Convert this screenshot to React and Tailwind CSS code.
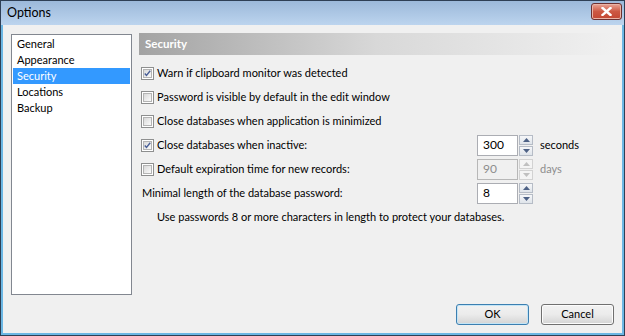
import { useState } from 'react';

const font = { fontFamily: 'Lato, "Liberation Sans", Arial, sans-serif' };

const Checkbox = ({ checked }) => (
  <div className="w-[13px] h-[13px] shrink-0 border border-[#8e8f8f] bg-white p-px">
    <div className="w-full h-full border border-[#b4b4b4] bg-gradient-to-br from-[#d9d9d9] to-[#fbfbfb] flex items-center justify-center">
      {checked && (
        <svg width="9" height="9" viewBox="0 0 9 9">
          <path d="M1 4.5 L3.2 7 L8 1" fill="none" stroke="#4a5f97" strokeWidth="1.8" />
        </svg>
      )}
    </div>
  </div>
);

const Spinner = ({ value, disabled }) => (
  <div className="flex items-stretch h-[21px]">
    <div
      className={`w-[41px] border flex items-center pl-[5px] text-[12px] ${
        disabled ? 'bg-[#f0f0f0] border-[#b7b7b7] text-[#8d8d8d]' : 'bg-white border-[#abadb3] text-black'
      }`}
    >
      {value}
    </div>
    <div className="ml-px w-[14px] flex flex-col gap-px">
      {['up', 'down'].map((dir) => (
        <div
          key={dir}
          className={`flex-1 border flex items-center justify-center ${
            disabled ? 'border-[#d2d2d2] bg-[#f4f4f4]' : 'border-[#b6bcc6] bg-gradient-to-b from-[#f6f7f9] to-[#dfe4ea]'
          }`}
        >
          <svg width="7" height="4" viewBox="0 0 7 4">
            <path
              d={dir === 'up' ? 'M0 4 L3.5 0 L7 4 Z' : 'M0 0 L3.5 4 L7 0 Z'}
              fill={disabled ? '#c0c0c0' : '#4d6185'}
            />
          </svg>
        </div>
      ))}
    </div>
  </div>
);

const Row = ({ children, className = '' }) => (
  <div className={`h-[24px] flex items-center ${className}`}>{children}</div>
);

const CheckRow = ({ checked, label }) => (
  <Row className="pl-[2px] gap-[3px]">
    <Checkbox checked={checked} />
    <span>{label}</span>
  </Row>
);

const Button = ({ children, primary }) => (
  <div
    className={`w-[73px] h-[21px] rounded-[3px] border flex items-center justify-center bg-gradient-to-b from-[#f2f2f2] via-[#ebebeb] to-[#d4d4d4] ${
      primary ? 'border-[#3c7fb1] shadow-[inset_0_0_0_1px_#c4e5f6]' : 'border-[#707070] shadow-[inset_0_0_0_1px_#fcfcfc]'
    }`}
  >
    {children}
  </div>
);

const App = () => {
  const [selected, setSelected] = useState('Security');
  const pages = ['General', 'Appearance', 'Security', 'Locations', 'Backup'];

  return (
    <div className="w-[625px] h-[336px] border border-[#2e3f55] bg-[#6cb7e4] flex flex-col text-[11px] text-black" style={font}>
      <div className="h-[24px] shrink-0 bg-gradient-to-b from-[#9cb9da] to-[#bcd4ee] flex items-center justify-between pl-[6px] pr-[2px]">
        <span className="text-[12.5px] text-black">Options</span>
        <div className="w-[31px] h-[17px] mb-[3px] rounded-[3px] border border-[#6d3030] bg-gradient-to-b from-[#e8a496] via-[#cd5843] to-[#c34733] flex items-center justify-center shadow-[inset_0_0_0_1px_#eab3a6]">
          <svg width="11" height="9" viewBox="0 0 11 9">
            <path d="M1.5 1 L9.5 8 M9.5 1 L1.5 8" stroke="#fff" strokeWidth="2.4" strokeLinecap="square" />
          </svg>
        </div>
      </div>

      <div className="flex-1 mx-[2px] mb-[2px] bg-[#f0f0f0] flex flex-col">
        <div className="flex pl-[8px] pt-[8px]">
          <div className="w-[121px] h-[261px] mt-px border border-[#828790] bg-white p-px">
            {pages.map((p) => (
              <div
                key={p}
                onClick={() => setSelected(p)}
                className={`h-[16px] pl-[4px] flex items-center ${selected === p ? 'bg-[#3399ff] text-white' : ''}`}
              >
                {p}
              </div>
            ))}
          </div>

          <div className="ml-[7px] w-[474px] flex flex-col">
            <div className="h-[22px] bg-gradient-to-r from-[#a3a3a3] via-[#d8d8d8] to-[#f0f0f0] flex items-center pl-[6px]">
              <span className="font-bold text-white text-[11.5px]">Security</span>
            </div>
            <div className="mt-[6px] flex flex-col">
              <CheckRow checked label="Warn if clipboard monitor was detected" />
              <CheckRow label="Password is visible by default in the edit window" />
              <CheckRow label="Close databases when application is minimized" />
              <Row>
                <div className="w-[338px] pl-[2px] flex items-center gap-[3px]">
                  <Checkbox checked />
                  <span>Close databases when inactive:</span>
                </div>
                <Spinner value="300" />
                <span className="ml-[7px]">seconds</span>
              </Row>
              <Row>
                <div className="w-[338px] pl-[2px] flex items-center gap-[3px]">
                  <Checkbox />
                  <span>Default expiration time for new records:</span>
                </div>
                <Spinner value="90" disabled />
                <span className="ml-[7px] text-[#8d8d8d]">days</span>
              </Row>
              <Row>
                <div className="w-[338px] pl-[3px]">Minimal length of the database password:</div>
                <Spinner value="8" />
              </Row>
              <Row className="pl-[18px]">
                Use passwords 8 or more characters in length to protect your databases.
              </Row>
            </div>
          </div>
        </div>

        <div className="mt-auto mb-[8px] pr-[8px] flex justify-end gap-[12px]">
          <Button primary>OK</Button>
          <Button>Cancel</Button>
        </div>
      </div>
    </div>
  );
};

export default App;
